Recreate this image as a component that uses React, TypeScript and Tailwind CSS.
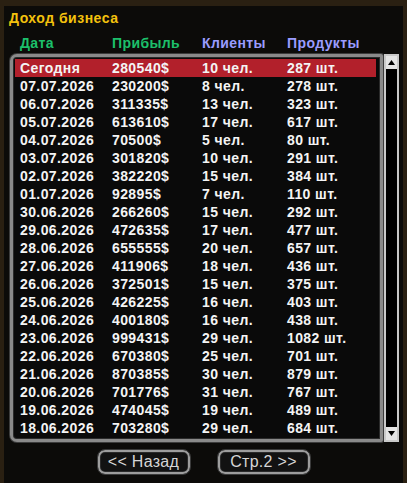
import React from "react";

type Row = [string, string, string, string];

const rows: Row[] = [
  ["Сегодня", "280540$", "10 чел.", "287 шт."],
  ["07.07.2026", "230200$", "8 чел.", "278 шт."],
  ["06.07.2026", "311335$", "13 чел.", "323 шт."],
  ["05.07.2026", "613610$", "17 чел.", "617 шт."],
  ["04.07.2026", "70500$", "5 чел.", "80 шт."],
  ["03.07.2026", "301820$", "10 чел.", "291 шт."],
  ["02.07.2026", "382220$", "15 чел.", "384 шт."],
  ["01.07.2026", "92895$", "7 чел.", "110 шт."],
  ["30.06.2026", "266260$", "15 чел.", "292 шт."],
  ["29.06.2026", "472635$", "17 чел.", "477 шт."],
  ["28.06.2026", "655555$", "20 чел.", "657 шт."],
  ["27.06.2026", "411906$", "18 чел.", "436 шт."],
  ["26.06.2026", "372501$", "15 чел.", "375 шт."],
  ["25.06.2026", "426225$", "16 чел.", "403 шт."],
  ["24.06.2026", "400180$", "16 чел.", "438 шт."],
  ["23.06.2026", "999431$", "29 чел.", "1082 шт."],
  ["22.06.2026", "670380$", "25 чел.", "701 шт."],
  ["21.06.2026", "870385$", "30 чел.", "879 шт."],
  ["20.06.2026", "701776$", "31 чел.", "767 шт."],
  ["19.06.2026", "474045$", "19 чел.", "489 шт."],
  ["18.06.2026", "703280$", "29 чел.", "684 шт."],
];

const cols = "grid grid-cols-[92px_90px_85px_1fr]";

function ArrowButton({ up }: { up?: boolean }) {
  return (
    <div className="flex h-[13px] w-[11px] items-center justify-center bg-[#e4e4e4]">
      <svg width="7" height="5" viewBox="0 0 7 5">
        {up ? <polygon points="0,5 7,5 3.5,0" fill="#000" /> : <polygon points="0,0 7,0 3.5,5" fill="#000" />}
      </svg>
    </div>
  );
}

function NavButton({ label }: { label: string }) {
  return (
    <div className="flex h-[26px] w-[94px] items-center justify-center rounded-[8px] border border-[#3a3a3a] bg-[#121212] shadow-[inset_0_0_0_2px_#9d9d9d,inset_0_0_0_3px_#2a2a2a]">
      <span className="text-[16px] leading-none tracking-[0.3px] text-[#d6d6d6]">{label}</span>
    </div>
  );
}

export default function App() {
  return (
    <div
      className="flex h-[483px] w-[407px] flex-col border-x-4 border-t-[6px] border-[#2a2012] bg-[#0c0b09]"
      style={{ fontFamily: "'Liberation Sans', Arial, sans-serif" }}
    >
      <div className="flex h-[24px] items-center pl-[5px] text-[14px] font-bold tracking-[0.5px] text-[#f4c20d]">
        Доход бизнеса
      </div>
      <div className={`${cols} h-[24px] items-center pl-[16px] pt-[2px] text-[14px] font-bold tracking-[0.4px]`}>
        <span className="text-[#1cc06b]">Дата</span>
        <span className="text-[#1cc06b]">Прибыль</span>
        <span className="text-[#9a9cff]">Клиенты</span>
        <span className="text-[#9a9cff]">Продукты</span>
      </div>
      <div className="flex h-[388px] pl-[6px] pr-[4px]">
        <div className="flex-1 rounded-l-[7px] rounded-r-[2px] border-[3px] border-[#8a8a8a] bg-[#0a0a0a] pl-[2px] pr-[4px] pt-[2px] shadow-[0_0_0_1px_#3c3c3c,inset_0_0_0_1px_#2b2b2b]">
          {rows.map((r, i) => (
            <div
              key={r[0]}
              className={`${cols} h-[18px] items-center pl-[5px] text-[14px] font-bold leading-none tracking-[0.4px] text-[#f4f4f4] ${
                i === 0 ? "bg-[#b2202b]" : ""
              }`}
            >
              <span>{r[0]}</span>
              <span>{r[1]}</span>
              <span>{r[2]}</span>
              <span>{r[3]}</span>
            </div>
          ))}
        </div>
        <div className="ml-[1px] flex w-[15px] flex-col justify-between border-2 border-[#c9c9c9] bg-black">
          <ArrowButton up />
          <ArrowButton />
        </div>
      </div>
      <div className="flex justify-center gap-[26px] pt-[7px]">
        <NavButton label="<< Назад" />
        <NavButton label="Стр.2 >>" />
      </div>
    </div>
  );
}
